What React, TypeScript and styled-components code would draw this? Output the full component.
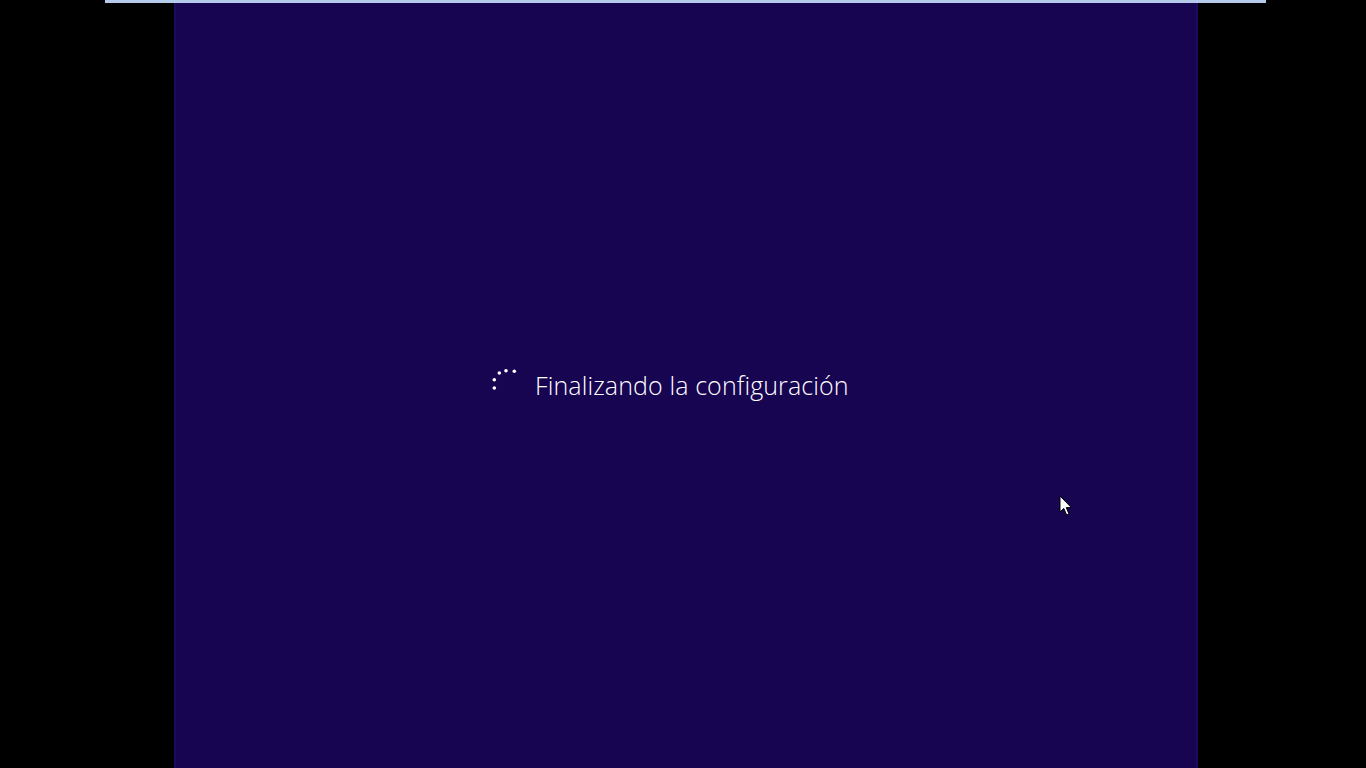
import React from "react";
import styled, { createGlobalStyle } from "styled-components";

const Global = createGlobalStyle`
  html, body { margin: 0; padding: 0; background: #000; overflow: hidden; }
  #root { width: 1366px; height: 768px; }
`;

const Screen = styled.div`
  position: relative;
  width: 1366px;
  height: 768px;
  background: #000;
  display: flex;
  flex-direction: row;
`;

const SideBlack = styled.div<{ $w: number }>`
  width: ${(p) => p.$w}px;
  flex: 0 0 auto;
  background: #000;
`;

const Panel = styled.div`
  width: 1024px;
  flex: 0 0 auto;
  box-sizing: border-box;
  background: #180552;
  border-left: 2px solid #1c0962;
  border-right: 2px solid #1c0962;
  display: flex;
  flex-direction: column;
  padding-top: 366px;
  padding-left: 315px;
`;

const StatusRow = styled.div`
  display: flex;
  flex-direction: row;
  align-items: flex-start;
  gap: 18px;
  height: 40px;
`;

const SpinnerBox = styled.svg`
  flex: 0 0 auto;
  display: block;
`;

const StatusText = styled.span`
  font-family: "Open Sans", "Noto Sans", sans-serif;
  font-weight: 300;
  font-size: 25px;
  line-height: 38px;
  letter-spacing: 0.11px;
  color: #ffffff;
  white-space: nowrap;
`;

const TopBar = styled.div`
  position: absolute;
  top: 0;
  left: 105px;
  width: 1161px;
  height: 3px;
  background: #b6cbec;
`;

const Cursor = styled.svg`
  position: absolute;
  left: 1059px;
  top: 495px;
`;

const Spinner = () => (
  <SpinnerBox width="26" height="24" viewBox="0 0 26 24">
    <circle cx="3.3" cy="22" r="1.8" fill="#fff" />
    <circle cx="3.3" cy="13.7" r="1.8" fill="#fff" />
    <circle cx="8.3" cy="7" r="1.8" fill="#fff" />
    <circle cx="15" cy="4.7" r="1.8" fill="#fff" />
    <circle cx="23.3" cy="5.3" r="1.8" fill="#fff" />
  </SpinnerBox>
);

export default function App() {
  return (
    <>
      <Global />
      <Screen>
        <SideBlack $w={174} />
        <Panel>
          <StatusRow>
            <Spinner />
            <StatusText>Finalizando la configuración</StatusText>
          </StatusRow>
        </Panel>
        <SideBlack $w={168} />
        <TopBar />
        <Cursor width="14" height="22" viewBox="0 0 14 22">
          <path
            d="M1 1 L1 17 L4.8 13.4 L7.6 20 L10 19 L7.3 12.6 L12.4 12.6 Z"
            fill="#fff"
            stroke="#000"
            strokeWidth="1"
            strokeLinejoin="miter"
          />
        </Cursor>
      </Screen>
    </>
  );
}
